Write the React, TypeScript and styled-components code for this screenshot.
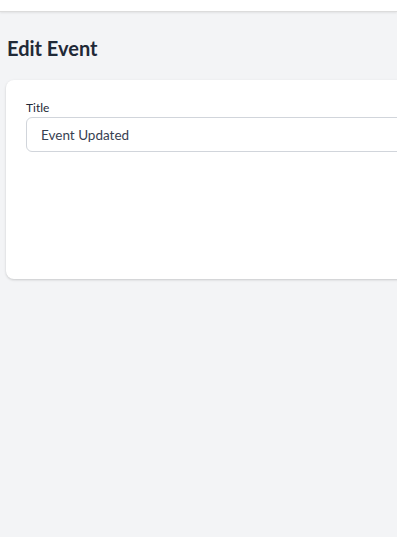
import React, { useState } from 'react';
import styled, { createGlobalStyle } from 'styled-components';

const GlobalStyle = createGlobalStyle`
  html, body {
    margin: 0;
    padding: 0;
    background-color: #f3f4f6;
    overflow-x: hidden;
    font-family: Lato, "Open Sans", sans-serif;
  }
  * {
    box-sizing: border-box;
  }
`;

const EditEventPage = () => {
  const [title, setTitle] = useState('Event Updated');

  return (
    <Page>
      <GlobalStyle />
      <TopBar />
      <Main>
        <Heading>Edit Event</Heading>
        <Card>
          <Field>
            <Label htmlFor="title">Title</Label>
            <Input
              id="title"
              value={title}
              onChange={e => setTitle(e.target.value)}
            />
          </Field>
        </Card>
      </Main>
    </Page>
  );
};

const Page = styled.div`
  min-height: 100vh;
  background-color: #f3f4f6;
`;

const TopBar = styled.header`
  height: 12px;
  background-color: #ffffff;
  border-bottom: 1px solid #dcdcdc;
  box-shadow: 0 1px 2px rgba(0, 0, 0, 0.08);
`;

const Main = styled.main`
  padding: 22px 6px 0;
`;

const Heading = styled.h1`
  margin: 0 0 18px 1px;
  font-size: 20px;
  line-height: 28px;
  font-weight: 700;
  color: #1f2937;
`;

const Card = styled.section`
  width: 680px;
  min-height: 199px;
  padding: 20px;
  background-color: #ffffff;
  border-radius: 8px;
  box-shadow: 0 1px 3px rgba(0, 0, 0, 0.12), 0 1px 2px rgba(0, 0, 0, 0.06);
`;

const Field = styled.div`
  display: flex;
  flex-direction: column;
  gap: 1px;
`;

const Label = styled.label`
  font-size: 12px;
  line-height: 16px;
  color: #1f2937;
`;

const Input = styled.input`
  height: 35px;
  width: 100%;
  padding: 0 14px;
  font-family: inherit;
  font-size: 13.5px;
  color: #374151;
  background-color: #ffffff;
  border: 1px solid #d1d5db;
  border-radius: 6px;
  outline: none;
`;

export default EditEventPage;
